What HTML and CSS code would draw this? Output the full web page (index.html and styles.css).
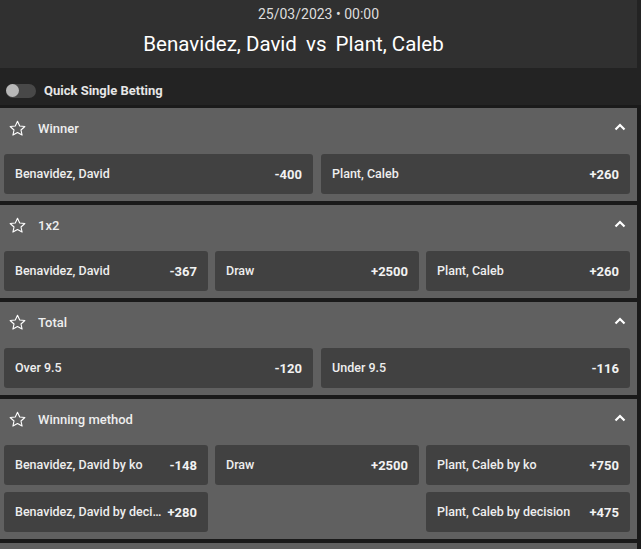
FILE: index.html
```html
<!DOCTYPE html>
<html lang="en">
<head>
    <meta charset="UTF-8">
    <meta name="viewport" content="width=device-width, initial-scale=1.0">
    <title>Benavidez, David vs Plant, Caleb</title>
    <link rel="stylesheet" href="styles.css">
</head>
<body>
    <div class="top">
        <div class="event">
            <div class="event-date">25/03/2023 &bull; 00:00</div>
            <div class="event-title">Benavidez, David <span class="vs">vs</span> Plant, Caleb</div>
        </div>
        <div class="quick">
            <span class="toggle"><span class="knob"></span></span>
            <span class="quick-label">Quick Single Betting</span>
        </div>
    </div>

    <div class="markets">
        <div class="market">
            <div class="market-head">
                <svg class="star" viewBox="0 0 24 24"><path d="M12 2.8l2.8 6 6.5.7-4.9 4.4 1.4 6.4L12 17l-5.8 3.3 1.4-6.4-4.9-4.4 6.5-.7z"/></svg>
                <span class="market-name">Winner</span>
                <svg class="chevron" viewBox="0 0 12 8"><path d="M1.5 6.5L6 2l4.5 4.5"/></svg>
            </div>
            <div class="odds cols-2">
                <div class="bet"><span class="bet-name">Benavidez, David</span><span class="bet-price">-400</span></div>
                <div class="bet"><span class="bet-name">Plant, Caleb</span><span class="bet-price">+260</span></div>
            </div>
        </div>

        <div class="market">
            <div class="market-head">
                <svg class="star" viewBox="0 0 24 24"><path d="M12 2.8l2.8 6 6.5.7-4.9 4.4 1.4 6.4L12 17l-5.8 3.3 1.4-6.4-4.9-4.4 6.5-.7z"/></svg>
                <span class="market-name">1x2</span>
                <svg class="chevron" viewBox="0 0 12 8"><path d="M1.5 6.5L6 2l4.5 4.5"/></svg>
            </div>
            <div class="odds cols-3">
                <div class="bet"><span class="bet-name">Benavidez, David</span><span class="bet-price">-367</span></div>
                <div class="bet"><span class="bet-name">Draw</span><span class="bet-price">+2500</span></div>
                <div class="bet"><span class="bet-name">Plant, Caleb</span><span class="bet-price">+260</span></div>
            </div>
        </div>

        <div class="market">
            <div class="market-head">
                <svg class="star" viewBox="0 0 24 24"><path d="M12 2.8l2.8 6 6.5.7-4.9 4.4 1.4 6.4L12 17l-5.8 3.3 1.4-6.4-4.9-4.4 6.5-.7z"/></svg>
                <span class="market-name">Total</span>
                <svg class="chevron" viewBox="0 0 12 8"><path d="M1.5 6.5L6 2l4.5 4.5"/></svg>
            </div>
            <div class="odds cols-2">
                <div class="bet"><span class="bet-name">Over 9.5</span><span class="bet-price">-120</span></div>
                <div class="bet"><span class="bet-name">Under 9.5</span><span class="bet-price">-116</span></div>
            </div>
        </div>

        <div class="market">
            <div class="market-head">
                <svg class="star" viewBox="0 0 24 24"><path d="M12 2.8l2.8 6 6.5.7-4.9 4.4 1.4 6.4L12 17l-5.8 3.3 1.4-6.4-4.9-4.4 6.5-.7z"/></svg>
                <span class="market-name">Winning method</span>
                <svg class="chevron" viewBox="0 0 12 8"><path d="M1.5 6.5L6 2l4.5 4.5"/></svg>
            </div>
            <div class="odds cols-3">
                <div class="bet"><span class="bet-name">Benavidez, David by ko</span><span class="bet-price">-148</span></div>
                <div class="bet"><span class="bet-name">Draw</span><span class="bet-price">+2500</span></div>
                <div class="bet"><span class="bet-name">Plant, Caleb by ko</span><span class="bet-price">+750</span></div>
                <div class="bet"><span class="bet-name" title="Benavidez, David by decision">Benavidez, David by deci...</span><span class="bet-price">+280</span></div>
                <div class="empty"></div>
                <div class="bet"><span class="bet-name">Plant, Caleb by decision</span><span class="bet-price">+475</span></div>
            </div>
        </div>

        <div class="market"></div>
    </div>
</body>
</html>
```

FILE: styles.css
```css
body {
    margin: 0;
    background-color: #1a1a1a;
    font-family: Roboto, "Liberation Sans", sans-serif;
    color: #eee;
}
.top {
    background-color: #232323;
}
.event {
    width: 637px;
    height: 68px;
    background-color: #303030;
    text-align: center;
    box-sizing: border-box;
    padding-top: 5px;
}
.event-date {
    font-size: 14px;
    line-height: 18px;
    color: #ddd;
}
.event-title {
    font-size: 20.5px;
    line-height: 24px;
    margin-top: 9px;
    padding-right: 50px;
    color: #fff;
}
.vs {
    margin: 0 4px;
}
.quick {
    height: 37px;
    display: flex;
    align-items: center;
    padding-left: 6px;
    padding-top: 8px;
    box-sizing: border-box;
}
.toggle {
    width: 30px;
    height: 14px;
    border-radius: 7px;
    background-color: #484848;
    display: flex;
    align-items: center;
}
.knob {
    width: 13px;
    height: 13px;
    border-radius: 50%;
    background-color: #b8b8b8;
}
.quick-label {
    margin-left: 8px;
    font-size: 13px;
    font-weight: bold;
    color: #e6e6e6;
}
.markets {
    width: 637px;
    padding-top: 3px;
}
.market {
    background-color: #606060;
    margin-bottom: 4px;
    padding-bottom: 7px;
}
.market-head {
    height: 40px;
    display: flex;
    align-items: center;
    padding-left: 8px;
    padding-right: 11px;
}
.star {
    width: 19px;
    height: 19px;
    fill: none;
    stroke: #fff;
    stroke-width: 1.4;
    stroke-linejoin: round;
}
.market-name {
    margin-left: 11px;
    font-size: 13px;
    font-weight: 500;
    color: #eee;
    flex: 1;
}
.chevron {
    width: 12px;
    height: 8px;
    fill: none;
    stroke: #fff;
    stroke-width: 2.2;
    margin-top: -3px;
}
.odds {
    display: grid;
    gap: 7px 7px;
    padding: 6px 7px 0 4px;
}
.cols-2 {
    grid-template-columns: 1fr 1fr;
    column-gap: 8px;
}
.cols-3 {
    grid-template-columns: 1fr 1fr 1fr;
}
.bet {
    height: 40px;
    background-color: #414141;
    border-radius: 3px;
    display: flex;
    align-items: center;
    padding: 0 11px 0 11px;
    font-size: 12.5px;
    min-width: 0;
}
.bet-name {
    flex: 1;
    white-space: nowrap;
    overflow: hidden;
    text-overflow: ellipsis;
    font-weight: 500;
    color: #eee;
    margin-top: -2px;
}
.bet-price {
    margin-left: 6px;
    font-weight: bold;
    font-size: 13px;
    color: #f2f2f2;
}
```
